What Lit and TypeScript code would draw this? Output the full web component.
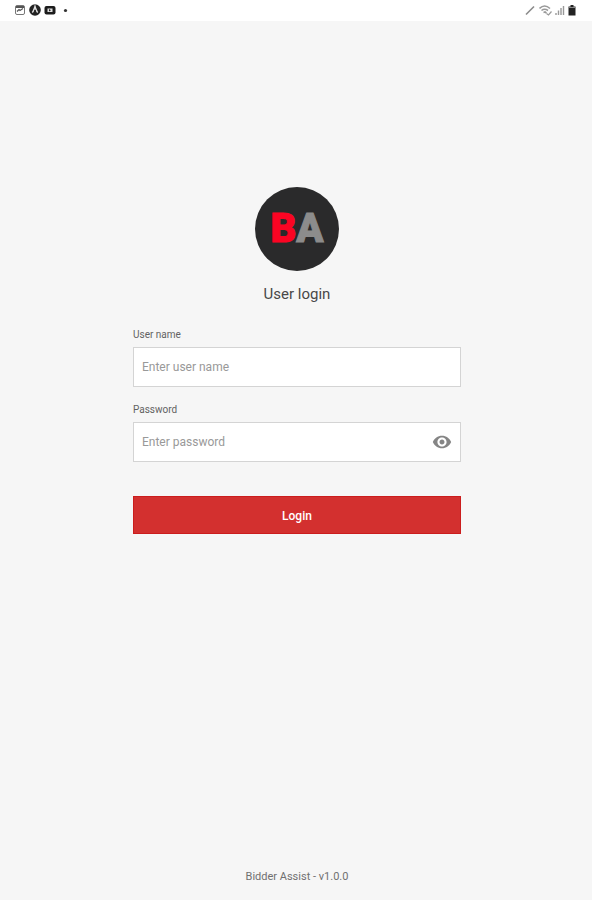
import { LitElement, html, css } from "lit";
import { customElement, state } from "lit/decorators.js";

@customElement("status-bar")
class StatusBar extends LitElement {
  static styles = css`
    :host {
      display: flex;
      justify-content: space-between;
      align-items: center;
      height: 21px;
      padding: 0 16px 1px 14px;
      box-sizing: border-box;
      background: #fff;
    }
    .group {
      display: flex;
      align-items: center;
      gap: 3px;
    }
    svg {
      display: block;
    }
  `;

  render() {
    return html`
      <div class="group">
        <svg width="12" height="12" viewBox="0 0 12 12" aria-hidden="true">
          <rect x="1.5" y="1.5" width="9" height="9" rx="1.5" fill="#fff" stroke="#777" />
          <path d="M2 2h8v2H2z" fill="#555" />
          <path d="M3 7.500l2-2 1 1 3-2" fill="none" stroke="#555" stroke-width="1.200" />
        </svg>
        <svg width="12" height="12" viewBox="0 0 12 12" aria-hidden="true">
          <circle cx="6" cy="6" r="5.800" fill="#222" />
          <path d="M3.200 8.500Q4.500 7.500 6 2.500Q7.500 7.500 8.800 8.500" fill="none" stroke="#ddd" stroke-width="1.500" />
          <path d="M6 6v4" stroke="#222" stroke-width="1.500" />
        </svg>
        <svg width="12" height="12" viewBox="0 0 12 12" aria-hidden="true">
          <rect x="0.500" y="2" width="11" height="8.500" rx="2" fill="#1c1c1c" />
          <rect x="3.500" y="4.500" width="5" height="3.500" fill="#ddd" />
          <path d="M5 5l2 1.200L5 7.500z" fill="#222" />
        </svg>
        <svg width="12" height="12" viewBox="0 0 12 12" aria-hidden="true">
          <circle cx="6.500" cy="6.500" r="1.600" fill="#333" />
        </svg>
      </div>
      <div class="group">
        <svg width="12" height="12" viewBox="0 0 12 12" aria-hidden="true">
          <path d="M2 10.500L10 2.500" stroke="#8a8a8a" stroke-width="1.600" />
        </svg>
        <svg width="13" height="12" viewBox="0 0 13 12" aria-hidden="true">
          <path d="M0.500 4.500Q5.500-0.500 11 4.500M2.500 6.500Q5.500 4 9 6.500M4.500 8.500L6 8l1.500 1" fill="none" stroke="#999" stroke-width="1.600" />
          <path d="M7.500 9.500L9.500 11l3-3.500" fill="none" stroke="#999" stroke-width="1.200" />
        </svg>
        <svg width="10" height="12" viewBox="0 0 10 12" aria-hidden="true">
          <path d="M1 11V9M3.500 11V6.500M6 11V4M8.500 11V2" stroke="#999" stroke-width="1.400" />
        </svg>
        <svg width="8" height="12" viewBox="0 0 8 12" aria-hidden="true">
          <path d="M2.500 1h3v1.500H7.500V11.500H0.500V2.500h2z" fill="#222" />
          <path d="M1 3.500h6" stroke="#888" />
        </svg>
      </div>
    `;
  }
}

@customElement("app-root")
class AppRoot extends LitElement {
  @state() private shown = false;

  static styles = css`
    :host {
      display: flex;
      flex-direction: column;
      min-height: 100vh;
      background: #f6f6f6;
      color: #555;
      font-family: Roboto, "Liberation Sans", sans-serif;
    }
    main {
      flex: 1;
      display: flex;
      flex-direction: column;
      align-items: center;
      padding: 166px 16px 32px 18px;
    }
    .logo {
      display: flex;
      align-items: center;
      justify-content: center;
      width: 84px;
      height: 84px;
      border-radius: 50%;
      background: #2a2a2b;
      font-size: 40px;
      line-height: 48px;
      font-weight: 900;
      -webkit-text-stroke: 1px currentColor;
    }
    .b {
      color: #fb0423;
    }
    .a {
      color: #8c8c8c;
    }
    h1 {
      margin: 13px 0 25px;
      font-size: 15px;
      line-height: 20px;
      font-weight: 400;
      color: #484848;
    }
    form {
      width: 100%;
      max-width: 328px;
    }
    label {
      display: block;
      margin-bottom: 6px;
      font-size: 10px;
      line-height: 12px;
      color: #626262;
    }
    .box {
      display: flex;
      align-items: center;
      height: 40px;
      box-sizing: border-box;
      margin-bottom: 17px;
      padding: 0 8px;
      border: 1px solid #d4d4d4;
      background: #fff;
    }
    .box:focus-within {
      border-color: #999;
    }
    input {
      flex: 1;
      min-width: 0;
      padding: 0;
      border: 0;
      outline: 0;
      background: none;
      font: inherit;
      font-size: 12px;
      line-height: 16px;
      color: #333;
    }
    input::placeholder {
      color: #999;
      opacity: 1;
    }
    .eye {
      display: flex;
      padding: 0;
      border: 0;
      background: none;
      cursor: pointer;
    }
    .login {
      display: block;
      width: 100%;
      height: 38px;
      margin-top: 34px;
      padding: 2px 0 0;
      border: 1px solid #cb1d1d;
      background: #d3302f;
      color: #fff;
      font: inherit;
      font-size: 12px;
      font-weight: 500;
      cursor: pointer;
    }
    footer {
      padding: 0 0 16px 2px;
      text-align: center;
      font-size: 11px;
      line-height: 14px;
      color: #707070;
    }
  `;

  render() {
    return html`
      <status-bar></status-bar>
      <main>
        <div class="logo"><span class="b">B</span><span class="a">A</span></div>
        <h1>User login</h1>
        <form @submit=${(e: Event) => e.preventDefault()}>
          <label for="user">User name</label>
          <div class="box">
            <input id="user" type="text" placeholder="Enter user name" autocomplete="username" />
          </div>
          <label for="password">Password</label>
          <div class="box">
            <input
              id="password"
              type=${this.shown ? "text" : "password"}
              placeholder="Enter password"
              autocomplete="current-password"
            />
            <button
              class="eye"
              type="button"
              aria-label="Show password"
              aria-pressed=${this.shown ? "true" : "false"}
              @click=${() => (this.shown = !this.shown)}
            >
              <svg width="20" height="20" viewBox="0 0 24 24" fill="#858585" aria-hidden="true">
                <path
                  d="M12 4.500C7 4.500 2.730 7.610 1 12c1.730 4.390 6 7.500 11 7.500s9.270-3.110 11-7.500c-1.730-4.390-6-7.500-11-7.500zM12 17.500c-3 0-5.500-2.500-5.500-5.500S9 6.500 12 6.500s5.500 2.500 5.500 5.500-2.500 5.500-5.500 5.500zm0-8.500c-1.660 0-3 1.340-3 3s1.340 3 3 3 3-1.340 3-3-1.340-3-3-3z"
                />
              </svg>
            </button>
          </div>
          <button class="login" type="submit">Login</button>
        </form>
      </main>
      <footer>Bidder Assist - v1.0.0</footer>
    `;
  }
}
